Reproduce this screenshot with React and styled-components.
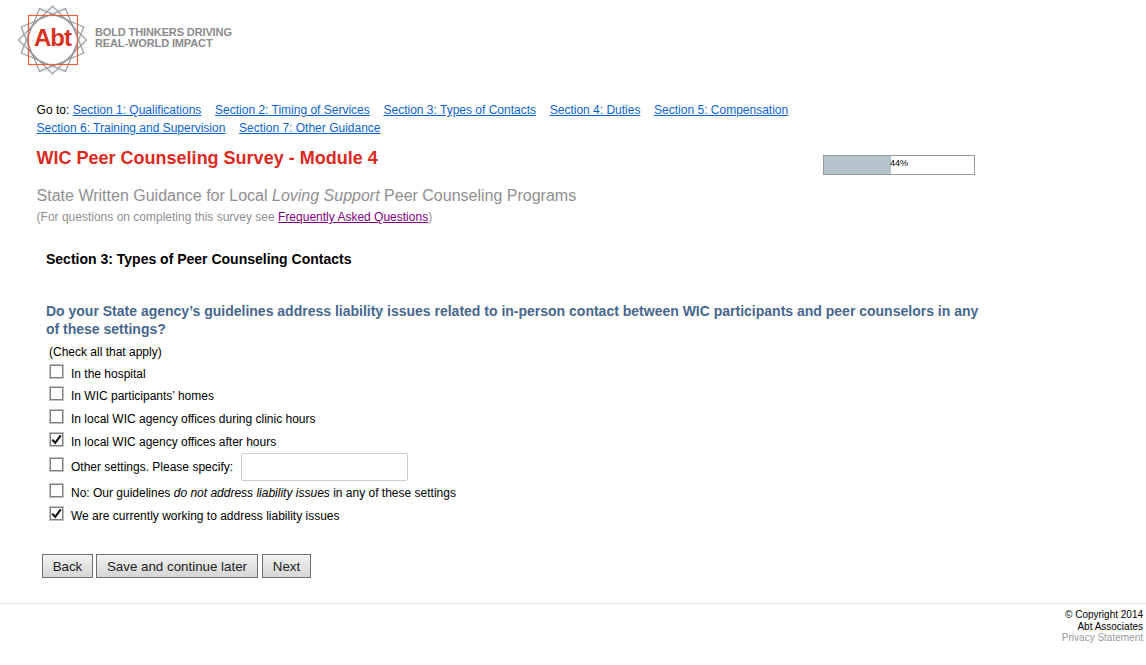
import React from "react";
import styled, { createGlobalStyle } from "styled-components";

const Global = createGlobalStyle`
  html, body { margin: 0; padding: 0; background: #fff; }
  body { font-family: "Liberation Sans", Arial, sans-serif; font-size: 12px; color: #000; }
`;
const Page = styled.div`width: 1146px; height: 665px; overflow: hidden;`;
const Header = styled.header`height: 101px; padding: 3px 0 0 15px; box-sizing: border-box; display: flex; align-items: flex-start; gap: 5px;`;
const Tagline = styled.div`
  margin-top: 24px; font-size: 11px; line-height: 11px; font-weight: bold; color: #8b8b8b; letter-spacing: -0.12px;
`;
const Main = styled.main`padding-left: 36.6px;`;
const Nav = styled.nav`width: 770px; line-height: 18px; font-size: 12px;`;
const NavLink = styled.a`color: #0b63ce; text-decoration: underline; margin-right: 13.7px; &:last-child { margin-right: 0; }`;
const TitleRow = styled.div`display: flex; justify-content: space-between; align-items: flex-start; width: 938.4px; margin-top: 11px; height: 38px;`;
const Title = styled.h1`margin: 0; font-size: 18px; line-height: 21px; font-weight: bold; color: #dc291e;`;
const Progress = styled.div`width: 152px; height: 20px; margin-top: 7px; box-sizing: border-box; border: 1px solid #999; position: relative; background: #fff; font-size: 9px; line-height: 15px;`;
const Fill = styled.div`height: 100%; background: #b5c3cc; float: left;`;
const Pct = styled.span`position: absolute; left: 66px; top: 0;`;
const Subtitle = styled.h2`margin: 0; font-size: 16px; line-height: 20px; font-weight: normal; color: #8f8f8f;`;
const Help = styled.p`margin: 3px 0 0; font-size: 12px; line-height: 16px; color: #8f8f8f;`;
const Faq = styled.a`color: #800080; text-decoration: underline;`;
const Content = styled.section`padding-left: 9.4px; width: 945px;`;
const SectionTitle = styled.h3`margin: 25px 0 0; font-size: 14px; line-height: 18px; font-weight: bold; color: #000;`;
const Question = styled.h4`margin: 34px 0 0; font-size: 14px; line-height: 18px; font-weight: bold; color: #46678f; width: 945px;`;
const Hint = styled.div`margin: 6px 0 0 3px; line-height: 16px; font-size: 12px;`;
const Options = styled.div`margin-top: 2px; margin-left: 3px; display: flex; flex-direction: column;`;
const Row = styled.label`display: flex; align-items: center; height: ${p => p.$h}px; font-size: 12px;`;
const RowText = styled.span`margin-top: 2px;`;
const Box = styled.span`
  flex: none; width: 15px; height: 15px; box-sizing: border-box; border: 1px solid #c0c0c0;
  box-shadow: inset 0 0 0 1px #808080; margin-right: 7px; margin-top: -3px; background: #fff;
  display: flex; align-items: center; justify-content: center;
`;
const Field = styled.input`
  width: 167px; height: 28px; box-sizing: border-box; margin: 2px 0 0 8px; border: 1px solid #ccc; border-radius: 2px; background: #fff;
`;
const Buttons = styled.div`margin: 28px 0 0 -4px; display: flex; gap: 3px;`;
const Button = styled.button`
  height: 24px; width: ${p => p.$w}px; padding: 0; box-sizing: border-box; font-family: inherit; font-size: 13.33px; color: #222;
  border: 1px solid #707070; border-radius: 0; background: linear-gradient(#f2f2f2, #d6d6d6);
  margin-right: ${p => p.$mr || 0}px;
`;
const Footer = styled.footer`
  margin-top: 25px; border-top: 1px solid #e4e4e4; padding: 5px 3px 0 0; text-align: right; font-size: 10px; line-height: 11.5px;
`;
const Privacy = styled.div`color: #999;`;

const Check = () => (
  <svg width="11" height="11" viewBox="0 0 11 11"><path d="M1.2 5.6 L4.2 8.8 L9.8 1.4" fill="none" stroke="#111" strokeWidth="2.1" /></svg>
);

const Logo = () => (
  <svg width="75" height="74" viewBox="0 0 75 74">
    <g fill="none" stroke="#9c9c9c" strokeWidth="1.2">
      {[22.5, 45, 67.5].map(r => (
        <rect key={r} x="13.5" y="13" width="48" height="48" transform={`rotate(${r} 37.5 37)`} />
      ))}
      <circle cx="37.5" cy="37" r="25" />
    </g>
    <rect x="13.5" y="12.5" width="49" height="49" fill="none" stroke="#e8603c" strokeWidth="1.2" />
    <text x="37.5" y="42.5" textAnchor="middle" fontFamily="Liberation Sans, Arial, sans-serif" fontWeight="bold" fontSize="24" letterSpacing="-1" fill="#d8321f">Abt</text>
  </svg>
);

const links1 = ["Section 1: Qualifications", "Section 2: Timing of Services", "Section 3: Types of Contacts", "Section 4: Duties", "Section 5: Compensation"];
const links2 = ["Section 6: Training and Supervision", "Section 7: Other Guidance"];

const Option = ({ h, checked, children }) => (
  <Row $h={h}>
    <Box>{checked && <Check />}</Box>
    <RowText>{children}</RowText>
  </Row>
);

export default function App() {
  return (
    <Page>
      <Global />
      <Header>
        <Logo />
        <Tagline>BOLD THINKERS DRIVING<br />REAL-WORLD IMPACT</Tagline>
      </Header>
      <Main>
        <Nav>
          <div>Go to: {links1.map(l => <NavLink href="#" key={l}>{l}</NavLink>)}</div>
          <div>{links2.map(l => <NavLink href="#" key={l}>{l}</NavLink>)}</div>
        </Nav>
        <TitleRow>
          <Title>WIC Peer Counseling Survey - Module 4</Title>
          <Progress>
            <Fill style={{ width: "44.5%" }} />
            <Pct>44%</Pct>
          </Progress>
        </TitleRow>
        <Subtitle>State Written Guidance for Local <em>Loving Support</em> Peer Counseling Programs</Subtitle>
        <Help>(For questions on completing this survey see <Faq href="#">Frequently Asked Questions</Faq>)</Help>
        <Content>
          <SectionTitle>Section 3: Types of Peer Counseling Contacts</SectionTitle>
          <Question>Do your State agency’s guidelines address liability issues related to in-person contact between WIC participants and peer counselors in any of these settings?</Question>
          <Hint>(Check all that apply)</Hint>
          <Options>
            <Option h={22}>In the hospital</Option>
            <Option h={22}>In WIC participants’ homes</Option>
            <Option h={23}>In local WIC agency offices during clinic hours</Option>
            <Option h={23} checked>In local WIC agency offices after hours</Option>
            <Row $h={28}>
              <Box />
              <RowText>Other settings. Please specify:</RowText>
              <Field type="text" />
            </Row>
            <Option h={24}>No: Our guidelines <em>do not address liability issues</em> in any of these settings</Option>
            <Option h={22} checked>We are currently working to address liability issues</Option>
          </Options>
          <Buttons>
            <Button $w={51}>Back</Button>
            <Button $w={162} $mr={1}>Save and continue later</Button>
            <Button $w={49}>Next</Button>
          </Buttons>
        </Content>
      </Main>
      <Footer>
        <div>© Copyright 2014</div>
        <div>Abt Associates</div>
        <Privacy>Privacy Statement</Privacy>
      </Footer>
    </Page>
  );
}
